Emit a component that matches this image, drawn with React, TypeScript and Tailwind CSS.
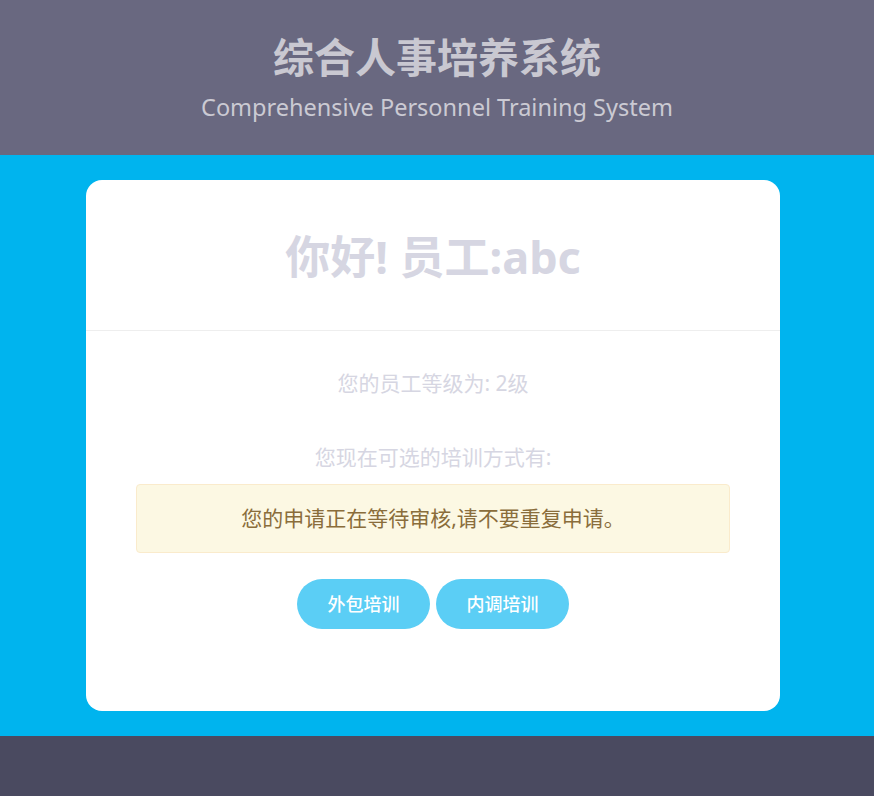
import React from 'react';

const font = { fontFamily: '"Noto Sans", "Noto Sans CJK SC", sans-serif' };

const App = () => {
  const options = ['外包培训', '内调培训'];

  return (
    <div className="w-full min-h-[796px] flex flex-col" style={font}>
      <header className="h-[155px] bg-[#696880] flex flex-col items-center pt-[30px]">
        <h1 className="text-[41px] leading-[54px] font-bold text-[#c9c8d1]">综合人事培养系统</h1>
        <p className="text-[23.5px] leading-[34px] mt-[6px] text-[#cbcad3]">Comprehensive Personnel Training System</p>
      </header>

      <main className="bg-[#00b4ee] pl-[86px] pr-[94px] pt-[25px] pb-[25px] h-[581px]">
        <div className="bg-white rounded-[16px] h-[531px] flex flex-col">
          <div className="h-[151px] flex items-center justify-center border-b border-[#eeeeee]">
            <h2 className="text-[45px] font-bold text-[#d6d6e2] pt-[4px]">你好! 员工:abc</h2>
          </div>
          <div className="flex flex-col items-center px-[50px]">
            <p className="mt-[38px] text-[21px] leading-[28px] text-[#d6d6e2]">您的员工等级为: 2级</p>
            <p className="mt-[46px] text-[21px] leading-[28px] text-[#d6d6e2]">您现在可选的培训方式有:</p>
            <div className="mt-[13px] w-full h-[69px] rounded-[4px] border border-[#faebcc] bg-[#fcf8e3] flex items-center justify-center">
              <span className="text-[21px] text-[#8a6d3b]">您的申请正在等待审核,请不要重复申请。</span>
            </div>
            <div className="mt-[26px] flex gap-[6px]">
              {options.map((o) => (
                <button
                  key={o}
                  className="w-[133px] h-[50px] rounded-full bg-[#5bcef5] text-white text-[18px] font-medium"
                >
                  {o}
                </button>
              ))}
            </div>
          </div>
        </div>
      </main>

      <footer className="h-[60px] bg-[#4a4a60]" />
    </div>
  );
};

export default App;
